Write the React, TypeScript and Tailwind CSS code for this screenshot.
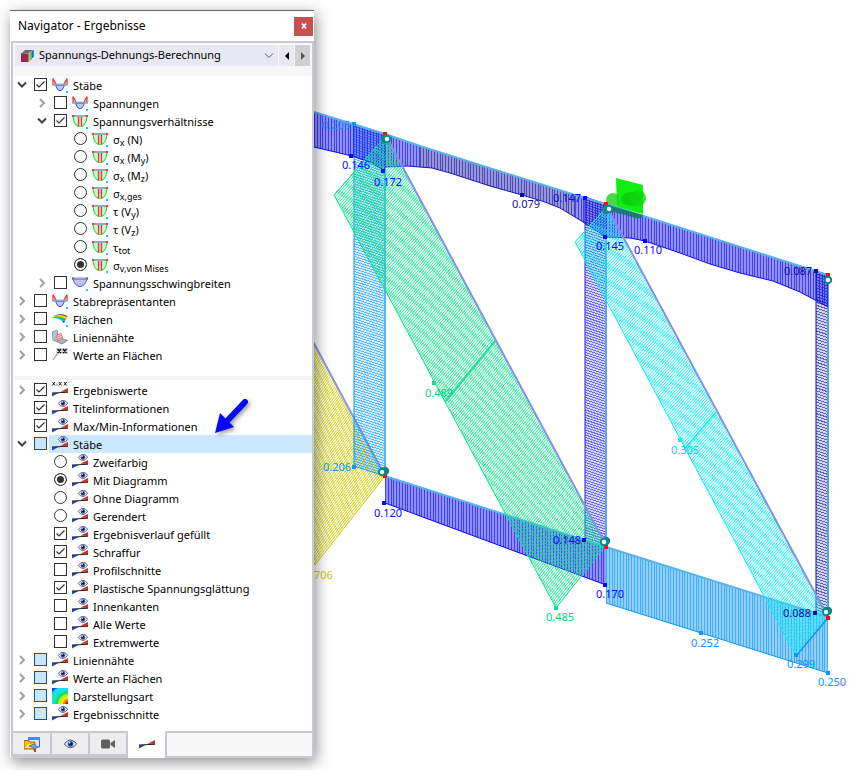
import { useId, useState, type ReactNode } from "react";

type IconKind =
  | "member"
  | "ratio"
  | "range"
  | "surface"
  | "weld"
  | "surfaceValues"
  | "values"
  | "display"
  | "rainbow";

type Row = {
  level: 0 | 1 | 2;
  icon: IconKind;
  label: ReactNode;
  control: "checkbox" | "partial" | "radio";
  checked?: boolean;
  open?: boolean;
  selected?: boolean;
};

const Sub = ({ children }: { children: ReactNode }) => <sub className="text-[9px]">{children}</sub>;

const resultRows: Row[] = [
  { level: 0, icon: "member", label: "Stäbe", control: "checkbox", checked: true, open: true },
  { level: 1, icon: "member", label: "Spannungen", control: "checkbox", open: false },
  { level: 1, icon: "ratio", label: "Spannungsverhältnisse", control: "checkbox", checked: true, open: true },
  { level: 2, icon: "ratio", label: <>σ<Sub>x</Sub> (N)</>, control: "radio" },
  { level: 2, icon: "ratio", label: <>σ<Sub>x</Sub> (M<Sub>y</Sub>)</>, control: "radio" },
  { level: 2, icon: "ratio", label: <>σ<Sub>x</Sub> (M<Sub>z</Sub>)</>, control: "radio" },
  { level: 2, icon: "ratio", label: <>σ<Sub>x,ges</Sub></>, control: "radio" },
  { level: 2, icon: "ratio", label: <>τ (V<Sub>y</Sub>)</>, control: "radio" },
  { level: 2, icon: "ratio", label: <>τ (V<Sub>z</Sub>)</>, control: "radio" },
  { level: 2, icon: "ratio", label: <>τ<Sub>tot</Sub></>, control: "radio" },
  { level: 2, icon: "ratio", label: <>σ<Sub>v,von Mises</Sub></>, control: "radio", checked: true },
  { level: 1, icon: "range", label: "Spannungsschwingbreiten", control: "checkbox", open: false },
  { level: 0, icon: "member", label: "Stabrepräsentanten", control: "checkbox", open: false },
  { level: 0, icon: "surface", label: "Flächen", control: "checkbox", open: false },
  { level: 0, icon: "weld", label: "Liniennähte", control: "checkbox", open: false },
  { level: 0, icon: "surfaceValues", label: "Werte an Flächen", control: "checkbox", open: false },
];

const displayRows: Row[] = [
  { level: 0, icon: "values", label: "Ergebniswerte", control: "checkbox", checked: true, open: false },
  { level: 0, icon: "display", label: "Titelinformationen", control: "checkbox", checked: true },
  { level: 0, icon: "display", label: "Max/Min-Informationen", control: "checkbox", checked: true },
  { level: 0, icon: "display", label: "Stäbe", control: "partial", open: true, selected: true },
  { level: 1, icon: "display", label: "Zweifarbig", control: "radio" },
  { level: 1, icon: "display", label: "Mit Diagramm", control: "radio", checked: true },
  { level: 1, icon: "display", label: "Ohne Diagramm", control: "radio" },
  { level: 1, icon: "display", label: "Gerendert", control: "radio" },
  { level: 1, icon: "display", label: "Ergebnisverlauf gefüllt", control: "checkbox", checked: true },
  { level: 1, icon: "display", label: "Schraffur", control: "checkbox", checked: true },
  { level: 1, icon: "display", label: "Profilschnitte", control: "checkbox" },
  { level: 1, icon: "display", label: "Plastische Spannungsglättung", control: "checkbox", checked: true },
  { level: 1, icon: "display", label: "Innenkanten", control: "checkbox" },
  { level: 1, icon: "display", label: "Alle Werte", control: "checkbox" },
  { level: 1, icon: "display", label: "Extremwerte", control: "checkbox" },
  { level: 0, icon: "display", label: "Liniennähte", control: "partial", open: false },
  { level: 0, icon: "display", label: "Werte an Flächen", control: "partial", open: false },
  { level: 0, icon: "rainbow", label: "Darstellungsart", control: "partial", open: false },
  { level: 0, icon: "display", label: "Ergebnisschnitte", control: "partial", open: false },
];

const Eye = () => (
  <>
    <path d="M0.5 5Q5 -1.5 10 0.6Q14 2 15.5 5Q12 9.6 8 9.6Q3.500 9.600 .5 5Z" fill="#e4e8f6" stroke="#3c4884" strokeWidth="1.200" />
    <circle cx="8" cy="4.800" r="3.500" fill="#3048a0" />
    <circle cx="8" cy="4.800" r="1.700" fill="#0a1038" />
    <circle cx="6.800" cy="3.200" r="1.200" fill="#dfe8ff" />
  </>
);

const Wedges = () => (
  <>
    <path d="M0 11H6.500L0 14.500Z" fill="#2848c0" />
    <path d="M8.500 9.800L16 6V10Z" fill="#d83018" />
    <path d="M0 11L16 10.200" stroke="#222" strokeWidth="1.100" />
  </>
);

function RowIcon({ kind }: { kind: IconKind }) {
  return (
    <svg viewBox="0 0 16 16" className="size-4 shrink-0" aria-hidden="true">
      {kind === "member" && (
        <>
          <path d="M1 8V1.500L4.500 8M15 8V1.500L11.500 8" fill="#ffd0d0" stroke="#f03030" strokeWidth="1.200" />
          <path d="M3.500 8.500Q5.500 13.800 8 13.800T12.500 8.500Z" fill="#c0c8ff" stroke="#3848e0" />
          <path d="M0 7.700H16" stroke="#90a4b8" strokeWidth="2" />
        </>
      )}
      {kind === "ratio" && (
        <>
          <path d="M1 3.500Q2 13.500 8 13.500T15 3.500Z" fill="#c8ffc8" stroke="#30e040" strokeWidth="1.200" />
          <path d="M6 4H10V13.200H6Z" fill="#ffd4d4" />
          <path d="M6.500 4V13.500M9.500 4V13.500" stroke="#e83838" strokeWidth="1.300" />
          <path d="M0 3H16" stroke="#90a8c0" strokeWidth="2" />
          <path d="M0 2H2V4H0ZM14 2H16V4H14Z" fill="#f03838" />
        </>
      )}
      {kind === "range" && (
        <>
          <path d="M1 4Q3 11.500 8 11.500T15 4Z" fill="#c0c4ff" stroke="#4858e0" />
          <path d="M0 3.500H16" stroke="#90a0b8" strokeWidth="2" />
          <path d="M0 2.500H2V4.500H0ZM14 2.500H16V4.500H14Z" fill="#d83848" />
        </>
      )}
      {kind === "surface" && (
        <>
          <path d="M0 6.500Q7 .5 15.500 5L12 12Q8 7 0 6.500Z" fill="#18b8f0" />
          <path d="M1 5.700Q8 1 15.500 5L14.500 7Q8 3.500 1 5.700Z" fill="#e03020" />
          <path d="M0 6.500Q7 1.800 15 6L14 8Q8 4.600 0 6.500Z" fill="#f8d810" />
          <path d="M0 6.500Q7 3.800 14 8L13.200 9.500Q7 5.600 0 6.500Z" fill="#30c840" />
          <path d="M12.800 10L12 12L10.300 10.300Z" fill="#1838c8" />
        </>
      )}
      {kind === "weld" && (
        <>
          <path d="M.5 3L5 1L6 8.500L15.500 11.500L10 15L1 11Z" fill="#a8b4c4" stroke="#687888" strokeWidth=".8" />
          <path d="M1 3.500L5 1V9L1 11Z" fill="#b8c4d2" />
          <path d="M4 7L9 4L11 9L6 12Z" fill="#f4c8c8" stroke="#d06060" strokeWidth=".7" />
          <path d="M5 8.500L9.500 6M5.500 10.500L10.300 8" stroke="#d06868" strokeWidth=".7" />
        </>
      )}
      {kind === "surfaceValues" && (
        <>
          <path d="M4 1H16V7H8L1 13L4 7Z" fill="#dcdcdc" />
          <path d="M1 13L5 7" stroke="#999" />
          <path d="M5.500 2L9 6M9 2L5.500 6M11 2L14.500 6M14.500 2L11 6" stroke="#111" strokeWidth="1.400" />
        </>
      )}
      {kind === "values" && (
        <>
          <path d="M.5 0L3 3.500M3 0L.5 3.500M7 0L9.500 3.500M9.500 0L7 3.500M12 0L14.500 3.500M14.500 0L12 3.500" stroke="#222" />
          <path d="M4.500 3H5.500" stroke="#222" />
          <Wedges />
        </>
      )}
      {kind === "display" && (
        <>
          <Wedges />
          <g transform="translate(6 0) scale(.62 .68)">
            <Eye />
          </g>
        </>
      )}
      {kind === "rainbow" && (
        <>
          <path d="M0 0H16V16H0Z" fill="#1848e8" />
          <path d="M16 1A17 15 0 0 0 1 16H16Z" fill="#18e0e8" />
          <path d="M0 5Q2 1 6 0H16V16H0Z" fill="#18e0e8" />
          <path d="M16 3A13 13 0 0 0 3 16H16Z" fill="#18e060" />
          <path d="M16 6A10 10 0 0 0 6 16H16Z" fill="#b8f010" />
          <path d="M16 8.500A7.500 7.500 0 0 0 8.500 16H16Z" fill="#ffe010" />
          <path d="M16 11A5 5 0 0 0 11 16H16Z" fill="#f88010" />
          <path d="M16 13.500A2.500 2.500 0 0 0 13.500 16H16Z" fill="#d01010" />
        </>
      )}
      {["member", "ratio", "range", "surface"].includes(kind) && <path d="M14 14H16V16H14Z" fill="#10c8f0" />}
    </svg>
  );
}

const indents = ["pl-0", "pl-5", "pl-10"];

function TreeRow({ row, group }: { row: Row; group: string }) {
  const id = useId();
  const [open, setOpen] = useState(row.open);
  return (
    <li className={`flex h-[18px] items-center ${indents[row.level]}`}>
      <span className="flex w-[21px] shrink-0 pl-1">
        {row.open !== undefined && (
          <button type="button" aria-label="Knoten umschalten" aria-expanded={open} onClick={() => setOpen(!open)}>
            <svg viewBox="0 0 10 10" className="size-[10px]" fill="none" strokeWidth="2">
              {open ? <path d="M1 2.500L5 6.500L9 2.500" stroke="#404040" /> : <path d="M3 1L7 5L3 9" stroke="#a0a0a0" />}
            </svg>
          </button>
        )}
      </span>
      {row.control === "radio" ? (
        <input
          id={id}
          type="radio"
          name={group}
          defaultChecked={row.checked}
          className="mb-0.5 size-[13px] shrink-0 appearance-none rounded-full border border-[#333] bg-white checked:bg-[#333] checked:shadow-[inset_0_0_0_2px_white]"
        />
      ) : (
        <span className="mb-0.5 grid size-[13px] shrink-0">
          <input
            id={id}
            type="checkbox"
            defaultChecked={row.checked}
            className={`peer col-start-1 row-start-1 size-[13px] appearance-none border ${
              row.control === "partial" ? "border-[#005a9e] bg-[#cce4f7]" : "border-[#333] bg-white"
            }`}
          />
          <svg
            viewBox="0 0 13 13"
            className="pointer-events-none invisible col-start-1 row-start-1 size-[13px] peer-checked:visible"
            fill="none"
            stroke="#333"
            strokeWidth="1.200"
          >
            <path d="M2.500 6.500L5 9L10.500 3.500" />
          </svg>
        </span>
      )}
      <label
        htmlFor={id}
        className={`ml-0.5 flex h-full items-center gap-[5px] whitespace-nowrap pl-[3px] ${
          row.selected ? "flex-1 bg-[#cce8ff]" : ""
        }`}
      >
        <RowIcon kind={row.icon} />
        <span className="pt-0.5 leading-4">{row.label}</span>
      </label>
    </li>
  );
}

function Tree({ rows, group }: { rows: Row[]; group: string }) {
  return (
    <ul className="bg-white">
      {rows.map((row, i) => (
        <TreeRow key={i} row={row} group={group} />
      ))}
    </ul>
  );
}

function Navigator() {
  const tab = "flex h-[25px] items-center justify-center border-t-2 border-r-2 border-b-2 border-[#c8c8d4] bg-[#ededed]";
  return (
    <aside className="relative z-10 mt-[10px] mb-3 ml-[10px] w-[304px] shrink-0 self-start border-t border-[#666] bg-white text-[11px] text-black shadow-[2px_4px_14px_rgba(0,0,0,0.45)]">
      <header className="flex h-[30px] items-center justify-between pr-px pl-2">
        <h1 className="text-[12px]">Navigator - Ergebnisse</h1>
        <button type="button" aria-label="Schließen" className="flex size-[19px] items-center justify-center bg-[#c75050]">
          <svg viewBox="0 0 8 8" className="size-2" stroke="white" strokeWidth="1.800">
            <path d="M2 1.500L6 6.500M6 1.500L2 6.500" />
          </svg>
        </button>
      </header>

      <div className="ml-px border-2 border-[#c8c8d4] bg-white">
        <div className="flex bg-[#f7f7f7] px-0.5 pt-[2px] pb-[10px]">
          <div className="relative flex h-[21px] flex-1 items-center bg-[#e8e8f2] pl-[5px]">
            <svg viewBox="0 0 14 14" className="size-[14px] shrink-0">
              <path d="M1 5L5 1H13L9 4Z" fill="#687080" />
              <path d="M8.500 4.500L13.500 1V8L8.500 13Z" fill="#18b0e8" />
              <path d="M8.500 4.500L10 3.300V11.500L8.500 13Z" fill="#f0c020" />
              <path d="M10 3.300L11.300 2.400V10.200L10 11.500Z" fill="#50d060" />
              <path d="M12.400 1.700L13.500 1V8L12.400 9Z" fill="#1840c8" />
              <path d="M1 4.500H8.500V13H1Z" fill="#98284c" />
            </svg>
            <select
              aria-label="Berechnung"
              className="h-full flex-1 appearance-none bg-transparent pl-[5px] text-[11px] outline-none"
            >
              <option>Spannungs-Dehnungs-Berechnung</option>
            </select>
            <svg viewBox="0 0 10 6" className="pointer-events-none absolute right-1 h-[6px] w-[10px]" fill="none" stroke="#555">
              <path d="M1 .5L5 4.500L9 .5" />
            </svg>
          </div>
          <button type="button" aria-label="Zurück" className="ml-px flex h-[21px] w-[15px] items-center justify-center bg-[#e8e8f2]">
            <svg viewBox="0 0 4 8" className="h-2 w-1"><path d="M4 0V8L0 4Z" /></svg>
          </button>
          <button type="button" aria-label="Weiter" className="ml-px flex h-[21px] w-[15px] items-center justify-center bg-[#d0d0d0]">
            <svg viewBox="0 0 4 8" className="h-2 w-1" fill="#555"><path d="M0 0V8L4 4Z" /></svg>
          </button>
        </div>
        <Tree rows={resultRows} group="stress" />
        <div className="mt-3 mb-px h-1 bg-[#f5f5f5]" />
        <Tree rows={displayRows} group="display" />
        <div className="h-2" />
      </div>

      <nav className="-mt-0.5 ml-px flex h-[27px] border-b-2 border-[#c8c8d4] bg-[#f7f7f7]">
        <button type="button" aria-label="Daten" className={`${tab} w-[41px] border-l-2`}>
          <svg viewBox="0 0 16 16" className="size-4">
            <path d="M4.500 1.500H15.500V11H4.500Z" fill="#dce8ff" stroke="#2c60c8" />
            <path d="M4 1H16V4H4Z" fill="#4888f0" />
            <path d="M0 4.500H5L6 6H11V13H0Z" fill="#f0b820" stroke="#98700c" />
            <path d="M1 12L4 8H11L8 12Z" fill="#ffe068" />
            <path d="M5 10L10 8L14 11L11.500 12V15.500L10 14.500V12Z" fill="#80a8e0" stroke="#38588c" strokeWidth=".7" />
            <path d="M11 12.500V16" stroke="#d02020" strokeWidth="1.500" />
          </svg>
        </button>
        <button type="button" aria-label="Anzeigen" className={`${tab} w-[38px]`}>
          <svg viewBox="0 0 16 10" className="h-[10px] w-[13px]"><Eye /></svg>
        </button>
        <button type="button" aria-label="Ansichten" className={`${tab} w-[38px]`}>
          <svg viewBox="0 0 14 10" className="h-[10px] w-[14px]" fill="#606060">
            <rect width="9" height="9" y=".5" rx="1.500" />
            <path d="M9.500 4L14 1V9L9.500 6Z" />
          </svg>
        </button>
        <button
          type="button"
          aria-label="Ergebnisse"
          className="flex h-[27px] w-[39px] items-center justify-center border-r-2 border-[#c8c8d4] bg-white"
        >
          <svg viewBox="0 5 16 12" className="h-3 w-4"><Wedges /></svg>
        </button>
        <span className="flex-1 border-t-2 border-r-2 border-[#c8c8d4]" />
      </nav>

      {/* pointer to the display section */}
      <svg
        viewBox="0 0 40 42"
        className="pointer-events-none absolute top-[386px] left-[201px] h-[42px] w-[40px] overflow-visible drop-shadow-[2px_2px_2px_rgba(0,0,0,0.4)]"
      >
        <path d="M34 5L17 23" stroke="#0808f8" strokeWidth="6" strokeLinecap="round" />
        <path d="M4 36L9 16L13 20L20 27L23 30Z" fill="#0808f8" />
      </svg>
    </aside>
  );
}

type Point = [number, number];

// Linear interpolation along a polyline that is parametrised by x
function yAt(points: Point[], x: number) {
  for (let i = 1; i < points.length; i++) {
    const [x0, y0] = points[i - 1];
    const [x1, y1] = points[i];
    if (x <= x1) return y0 + ((y1 - y0) * (x - x0)) / (x1 - x0);
  }
  return points[points.length - 1][1];
}

// Diagram of an inclined chord, hatched with vertical lines
function Chord({ base, outer, color }: { base: [Point, Point]; outer: Point[]; color: string }) {
  const lines: string[] = [];
  const start = base[0][0];
  const end = base[1][0];
  for (let i = 0; start + i * 2.8 < end; i++) {
    const x = Math.round(start + i * 2.8) + 0.5;
    lines.push(`M${x} ${yAt(base, x)}V${yAt(outer, x)}`);
  }
  const outline = [...base, ...[...outer].reverse()];
  return (
    <g>
      <polygon points={outline.join(" ")} fill={color} fillOpacity="0.45" />
      <path d={lines.join("")} stroke={color} strokeOpacity="0.6" />
      <polyline points={outer.join(" ")} fill="none" stroke={color} />
      <polyline points={base.join(" ")} stroke="#58b4e8" strokeWidth="2" />
    </g>
  );
}

// Diagram of a post or a diagonal, hatched from the member axis to the outer edge
function Member({ base, outer, color, axis, count }: { base: [Point, Point]; outer: [Point, Point]; color: string; axis: string; count: number }) {
  const mix = (a: Point, b: Point, t: number) => `${a[0] + (b[0] - a[0]) * t} ${a[1] + (b[1] - a[1]) * t}`;
  const lines = Array.from({ length: count }, (_, i) => {
    const t = i / count;
    return `M${mix(base[0], base[1], t)}L${mix(outer[0], outer[1], t)}`;
  });
  return (
    <g>
      <polygon points={[...base, outer[1], outer[0]].join(" ")} fill={color} fillOpacity="0.18" />
      <path d={lines.join("")} stroke={color} shapeRendering="crispEdges" strokeOpacity="0.6" />
      <polyline points={[base[0], outer[0], outer[1], base[1]].join(" ")} fill="none" stroke={color} />
      <polyline points={base.join(" ")} stroke={axis} strokeWidth="2" />
    </g>
  );
}

const BLUE = "#0808ff";
const NAVY = "#10109c";
const SKY = "#0c96fa";
const GREEN = "#10e488";
const CYAN = "#14ecf0";
const YELLOW = "#cccc00";

const labels: [string, number, number, string][] = [
  ["0.205", 322, 129, SKY],
  ["0.146", 342, 169, BLUE],
  ["0.172", 374, 186, BLUE],
  ["0.079", 512, 208, NAVY],
  ["0.147", 553, 202, BLUE],
  ["0.145", 596, 250, BLUE],
  ["0.110", 634, 254, BLUE],
  ["0.087", 784, 275, NAVY],
  ["0.206", 323, 471, SKY],
  ["0.489", 425, 397, "#08d47c"],
  ["0.120", 374, 517, BLUE],
  ["706", 314, 579, YELLOW],
  ["0.148", 553, 544, BLUE],
  ["0.170", 596, 598, BLUE],
  ["0.485", 546, 621, "#08d47c"],
  ["0.305", 671, 454, "#10d8e8"],
  ["0.252", 691, 647, SKY],
  ["0.299", 787, 668, SKY],
  ["0.088", 783, 617, NAVY],
  ["0.250", 818, 686, SKY],
];

const markers: [number, number, string][] = [
  [354, 124, SKY],
  [351, 156, BLUE],
  [383, 171, BLUE],
  [522, 195, NAVY],
  [585, 198, BLUE],
  [605, 237, BLUE],
  [645, 241, BLUE],
  [816, 271, NAVY],
  [354, 467, SKY],
  [434, 383, GREEN],
  [384, 503, BLUE],
  [584, 540, BLUE],
  [605, 585, BLUE],
  [556, 608, GREEN],
  [680, 440, CYAN],
  [701, 633, SKY],
  [796, 655, SKY],
  [815, 613, NAVY],
  [828, 673, SKY],
];

const nodes: { red: Point; rings: Point[] }[] = [
  { red: [385, 134], rings: [[385, 139], [387, 139]] },
  { red: [606, 204], rings: [[606, 210], [609, 209]] },
  { red: [828, 275], rings: [[828, 280]] },
  { red: [385, 476], rings: [[385, 471], [382, 472]] },
  { red: [606, 547], rings: [[606, 541], [604, 542]] },
  { red: [828, 618], rings: [[828, 611], [826, 612]] },
];

function Model() {
  return (
    <svg viewBox="314 0 535 770" preserveAspectRatio="xMinYMin meet" className="min-w-0 flex-1" role="img" aria-label="Spannungsverlauf">
      {/* support */}
      <path d="M616 178L643 185V214L617 207Z" fill="#10f010" />
      <circle cx="613" cy="200" r="7" fill="#14d414" fillOpacity=".8" />
      <ellipse cx="631" cy="199" rx="10" ry="7" fill="#0cd00c" />
      <circle cx="638" cy="198" r="8" fill="#10d810" fillOpacity=".8" />

      <Member base={[[240, 205], [385, 476]]} outer={[[170, 295], [315, 565]]} color={YELLOW} axis="#8c94ec" count={140} />
      <Member base={[[385, 134], [385, 476]]} outer={[[354, 124], [354, 466]]} color={SKY} axis="#58b4f8" count={137} />
      <Member base={[[606, 204], [606, 547]]} outer={[[585, 197], [585, 540]]} color="#2020f0" axis="#58a4f0" count={137} />
      <Member base={[[828, 275], [828, 617]]} outer={[[816, 271], [816, 613]]} color={NAVY} axis="#50a4e8" count={120} />

      <Chord base={[[314, 112], [385, 134]]} outer={[[314, 147], [352, 156], [372, 163], [385, 171]]} color={BLUE} />
      <Chord base={[[385, 134], [420, 146]]} outer={[[385, 167], [407, 166], [420, 167]]} color="#1010e8" />
      <Chord
        base={[[420, 146], [575, 195]]}
        outer={[[420, 167], [432, 168], [450, 173], [490, 186], [522, 195], [545, 202], [560, 208], [575, 217]]}
        color="#1818a8"
      />
      <Chord base={[[575, 195], [606, 204]]} outer={[[575, 217], [583, 222], [606, 237]]} color="#1010d8" />
      <Chord
        base={[[606, 204], [828, 275]]}
        outer={[[606, 237], [630, 238], [645, 241], [680, 253], [710, 264], [740, 273], [773, 281], [800, 292], [828, 307]]}
        color="#0c0cf0"
      />
      <path d="M612 206L643 215Q642 221 632 217L610 211Z" fill="#087858" fillOpacity=".8" />
      <Chord base={[[385, 476], [606, 547]]} outer={[[385, 503], [606, 585]]} color={BLUE} />
      <Chord base={[[606, 547], [828, 617]]} outer={[[606, 603], [828, 673]]} color={SKY} />

      <Member base={[[386, 136], [606, 545]]} outer={[[334, 195], [556, 608]]} color={GREEN} axis="#8490e8" count={205} />
      <Member base={[[607, 207], [828, 617]]} outer={[[575, 242], [796, 656]]} color={CYAN} axis="#8490e8" count={205} />
      <path d="M495 341L445 402" stroke={GREEN} strokeWidth="1.500" />
      <path d="M717 411L684 450" stroke={CYAN} strokeWidth="1.500" />
      <path d="M827 619L797 655" stroke={SKY} strokeWidth="1.500" />

      {markers.map(([x, y, color], i) => (
        <rect key={i} x={x - 2} y={y - 2} width="4" height="4" fill={color} />
      ))}
      {nodes.map(({ red, rings }, i) => (
        <g key={i}>
          <rect x={red[0] - 2} y={red[1] - 2} width="4" height="4" fill="#ff0808" />
          {rings.map(([x, y], n) => (
            <circle key={n} cx={x} cy={y} r="3.200" fill={n === rings.length - 1 ? "#e8fcf8" : "#108888"} stroke="#0c8888" strokeWidth="2" />
          ))}
        </g>
      ))}
      {labels.map(([text, x, y, color], i) => (
        <text key={i} x={x} y={y} fill={color} fontSize="11">
          {text}
        </text>
      ))}
    </svg>
  );
}

export default function App() {
  return (
    <main className="flex min-h-screen overflow-hidden bg-white font-['Noto_Sans','Open_Sans',sans-serif]">
      <Navigator />
      <Model />
    </main>
  );
}
